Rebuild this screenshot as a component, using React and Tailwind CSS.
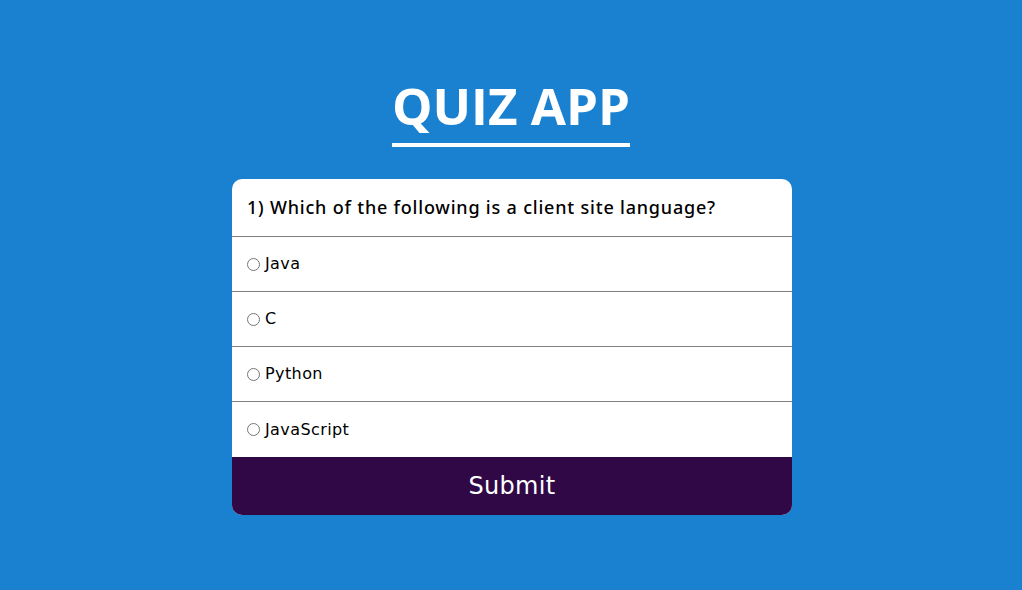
export default function App() {
  const options = ["Java", "C", "Python", "JavaScript"];
  return (
    <div className="min-h-[590px] w-full bg-[#1a80d0] flex flex-col items-center pt-[75px] font-['DejaVu_Sans',sans-serif]">
      <h1 className="text-white font-bold text-[51px] leading-[60px] underline decoration-[4px] underline-offset-[18px] font-['Open_Sans',sans-serif]">
        QUIZ APP
      </h1>
      <div className="mt-[44px] ml-[2px] w-[560px] bg-white rounded-[10px] overflow-hidden">
        <div className="h-[58px] flex items-center px-[15px] text-[18px] font-medium tracking-[0.8px] text-black border-b border-[#808080] font-['Noto_Sans',sans-serif]">
          1) Which of the following is a client site language?
        </div>
        {options.map((o) => (
          <label key={o} className="h-[55px] flex items-center px-[15px] text-[16px] tracking-[0.4px] text-black border-b border-[#808080] last-of-type:border-b-0">
            <input type="radio" name="q" className="w-[13px] h-[13px] mr-[5px]" />
            {o}
          </label>
        ))}
        <button className="w-full h-[58px] bg-[#310846] text-white text-[24px] tracking-[0.3px]">Submit</button>
      </div>
    </div>
  );
}
